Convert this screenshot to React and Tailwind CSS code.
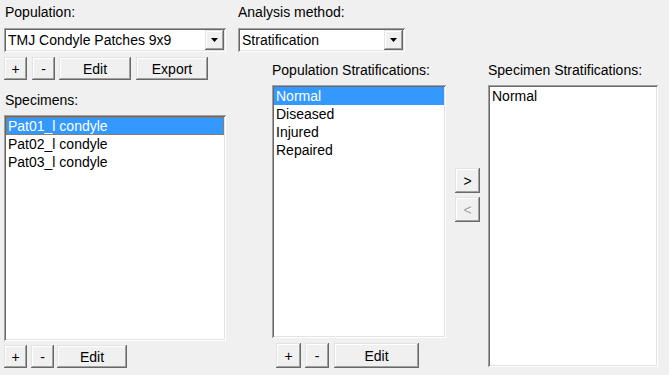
import React from "react";

const raisedBase =
  "flex items-center justify-center bg-[#f0f0f0] shadow-[inset_-1px_-1px_0_#696969,inset_1px_1px_0_#e3e3e3,inset_-2px_-2px_0_#a0a0a0,inset_2px_2px_0_#ffffff]";
const raised = `${raisedBase} text-black`;
const sunken =
  "bg-white shadow-[inset_1px_1px_0_#a0a0a0,inset_-1px_-1px_0_#ffffff,inset_2px_2px_0_#696969,inset_-2px_-2px_0_#e3e3e3]";

function Combo({ text, w }) {
  return (
    <div className={`${sunken} ${w} h-[24px] flex items-center p-[2px]`}>
      <div className="flex-1 pl-[2px] truncate">{text}</div>
      <div className={`${raised} w-[19px] h-[20px]`}>
        <svg width="8" height="5" viewBox="0 0 8 5">
          <polygon points="0,0 7,0 3.5,4" fill="#000" />
        </svg>
      </div>
    </div>
  );
}

function Item({ children, selected, focus }) {
  return (
    <div
      className={`h-[18px] pl-[2px] leading-[18px] ${
        selected ? "bg-[#3399ff] text-white" : "text-black"
      } ${focus ? "outline-1 outline-dotted outline-[#cc6600] -outline-offset-1" : ""}`}
    >
      {children}
    </div>
  );
}

export default function App() {
  return (
    <div className="w-[669px] h-[375px] bg-[#f0f0f0] flex pt-[3px] text-[14px] leading-[18px] text-black font-['Liberation_Sans',Arial,sans-serif] overflow-hidden">
      {/* Column 1 */}
      <div className="ml-[4px] w-[222px] flex flex-col">
        <div className="h-[18px] pl-[1px]">Population:</div>
        <div className="mt-[7px]">
          <Combo text="TMJ Condyle Patches 9x9" w="w-[222px]" />
        </div>
        <div className="mt-[5px] flex h-[23px]">
          <div className={`${raised} w-[23px]`}>+</div>
          <div className={`${raised} w-[23px] ml-[5px]`}>-</div>
          <div className={`${raised} w-[72px] ml-[4px]`}>Edit</div>
          <div className={`${raised} w-[72px] ml-[5px]`}>Export</div>
        </div>
        <div className="mt-[11px] h-[18px] pl-[1px]">Specimens:</div>
        <div className={`${sunken} mt-[6px] h-[226px] p-[2px]`}>
          <Item selected focus>Pat01_l condyle</Item>
          <Item>Pat02_l condyle</Item>
          <Item>Pat03_l condyle</Item>
        </div>
        <div className="mt-[4px] flex h-[23px]">
          <div className={`${raised} w-[23px]`}>+</div>
          <div className={`${raised} w-[23px] ml-[4px]`}>-</div>
          <div className={`${raised} w-[70px] ml-[3px]`}>Edit</div>
        </div>
      </div>

      {/* Column 2 */}
      <div className="ml-[12px] flex flex-col">
        <div className="h-[18px]">Analysis method:</div>
        <div className="mt-[7px]">
          <Combo text="Stratification" w="w-[167px]" />
        </div>
        <div className="mt-[9px] ml-[34px] flex">
          {/* Population stratifications */}
          <div className="w-[174px] flex flex-col">
            <div className="h-[18px]">Population Stratifications:</div>
            <div className={`${sunken} mt-[6px] h-[253px] p-[2px]`}>
              <Item selected>Normal</Item>
              <Item>Diseased</Item>
              <Item>Injured</Item>
              <Item>Repaired</Item>
            </div>
            <div className="mt-[5px] ml-[4px] flex h-[25px]">
              <div className={`${raised} w-[25px]`}>+</div>
              <div className={`${raised} w-[24px] ml-[4px]`}>-</div>
              <div className={`${raised} w-[85px] ml-[5px]`}>Edit</div>
            </div>
          </div>

          {/* Arrow buttons */}
          <div className="ml-[9px] w-[25px] flex flex-col pt-[107px]">
            <div className={`${raised} h-[25px]`}>&gt;</div>
            <div
              className={`${raisedBase} h-[25px] mt-[4px] text-[#a0a0a0] [text-shadow:1px_1px_0_#ffffff]`}
            >
              &lt;
            </div>
          </div>

          {/* Specimen stratifications */}
          <div className="ml-[8px] w-[170px] flex flex-col">
            <div className="h-[18px]">Specimen Stratifications:</div>
            <div className={`${sunken} mt-[6px] h-[282px] p-[2px]`}>
              <Item>Normal</Item>
            </div>
          </div>
        </div>
      </div>
    </div>
  );
}
